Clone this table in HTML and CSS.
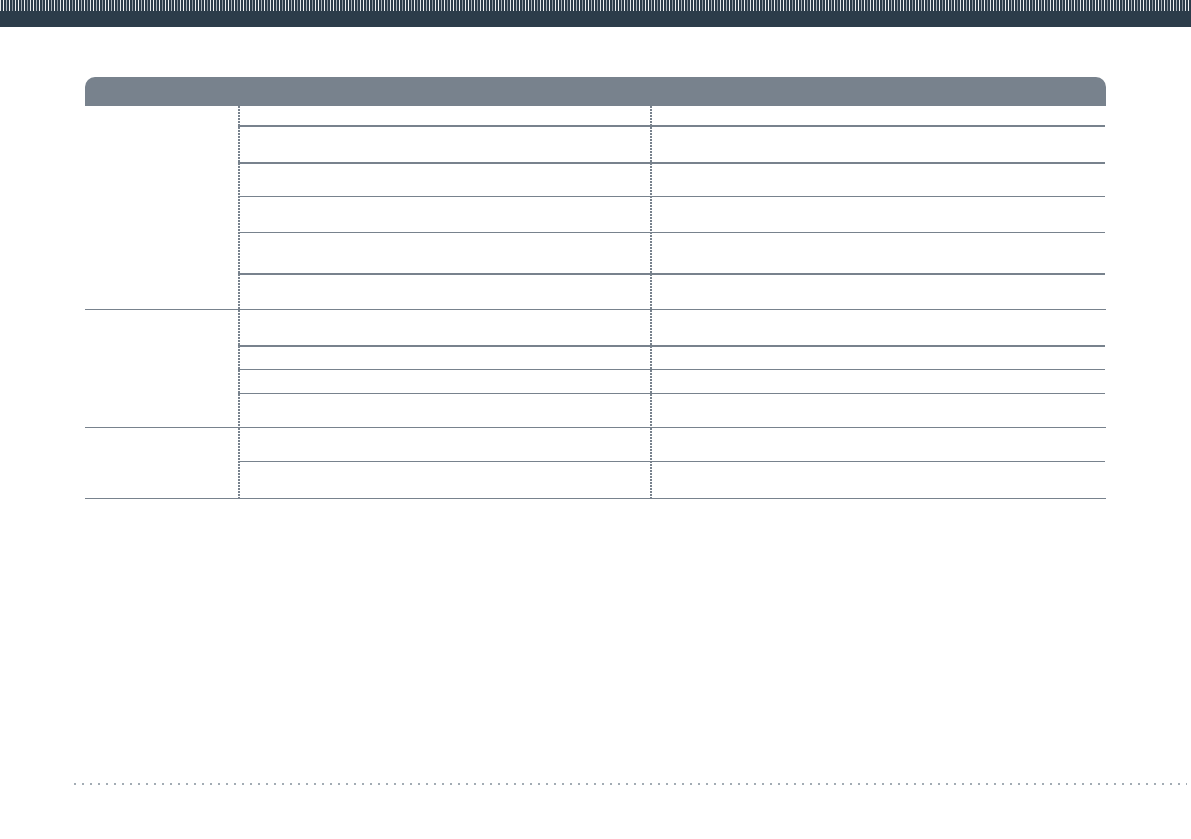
FILE: index.html
```html
<!DOCTYPE html>
<html lang="en">
<head>
<meta charset="utf-8">
<title>Table</title>
<link rel="stylesheet" href="styles.css">
</head>
<body>
<header class="topbar">
  <div class="stripes"></div>
</header>
<main class="page">
  <div class="table">
    <div class="thead"></div>
    <div class="group">
      <div class="label"></div>
      <div class="rows">
        <div class="row h19 thick"></div>
        <div class="row h35 thick"></div>
        <div class="row h32"></div>
        <div class="row h35"></div>
        <div class="row h40 thick"></div>
        <div class="row h34 last"></div>
      </div>
    </div>
    <div class="group">
      <div class="label"></div>
      <div class="rows">
        <div class="row h35 thick"></div>
        <div class="row h22"></div>
        <div class="row h23"></div>
        <div class="row h33 last"></div>
      </div>
    </div>
    <div class="group">
      <div class="label"></div>
      <div class="rows">
        <div class="row h33"></div>
        <div class="row h36 last"></div>
      </div>
    </div>
  </div>
</main>
<footer class="footer">
  <div class="dots"></div>
</footer>
</body>
</html>
```
FILE: styles.css
```css
html, body {
  margin: 0;
  padding: 0;
  background: #ffffff;
  font-family: "Liberation Sans", Arial, sans-serif;
}

.topbar {
  height: 27px;
  background: #2c3c4a;
}

.stripes {
  height: 11px;
  background:
    repeating-linear-gradient(to right,
      #e6e9ec 0 1px, #2c3c4a 1px 3px,
      #f2f4f5 3px 4px, #2c3c4a 4px 6px,
      #a9b1b8 6px 7px, #2c3c4a 7px 9px,
      #eef0f2 9px 10px, #2c3c4a 10px 12px,
      #8d969f 12px 13px, #2c3c4a 13px 15px);
}

.page {
  padding: 50px 85px 0 85px;
}

.table {
  width: 1021px;
}

.thead {
  height: 29px;
  background: #78828d;
  border-radius: 10px 10px 0 0;
}

.group {
  display: grid;
  grid-template-columns: 153px 1fr;
  border-bottom: 1px solid #78828d;
}

.rows {
  background-image:
    repeating-linear-gradient(to bottom, #78828d 0 2px, transparent 2px 3px),
    repeating-linear-gradient(to bottom, #78828d 0 2px, transparent 2px 3px);
  background-size: 2px 100%, 2px 100%;
  background-position: 0 0, 412px 0;
  background-repeat: no-repeat;
  padding-right: 1px;
}

.row {
  border-bottom: 1px solid #78828d;
}

.row.thick {
  border-bottom-width: 2px;
}

.row.last {
  border-bottom: 0;
}

.h19 { height: 19px; }
.h22 { height: 22px; }
.h23 { height: 23px; }
.h32 { height: 32px; }
.h33 { height: 33px; }
.h34 { height: 34px; }
.h35 { height: 35px; }
.h36 { height: 36px; }
.h40 { height: 40px; }

.footer {
  padding: 284px 4px 0 74px;
}

.dots {
  height: 2px;
  background: repeating-linear-gradient(to right, #a3acb4 0 2px, transparent 2px 8px);
}
```
